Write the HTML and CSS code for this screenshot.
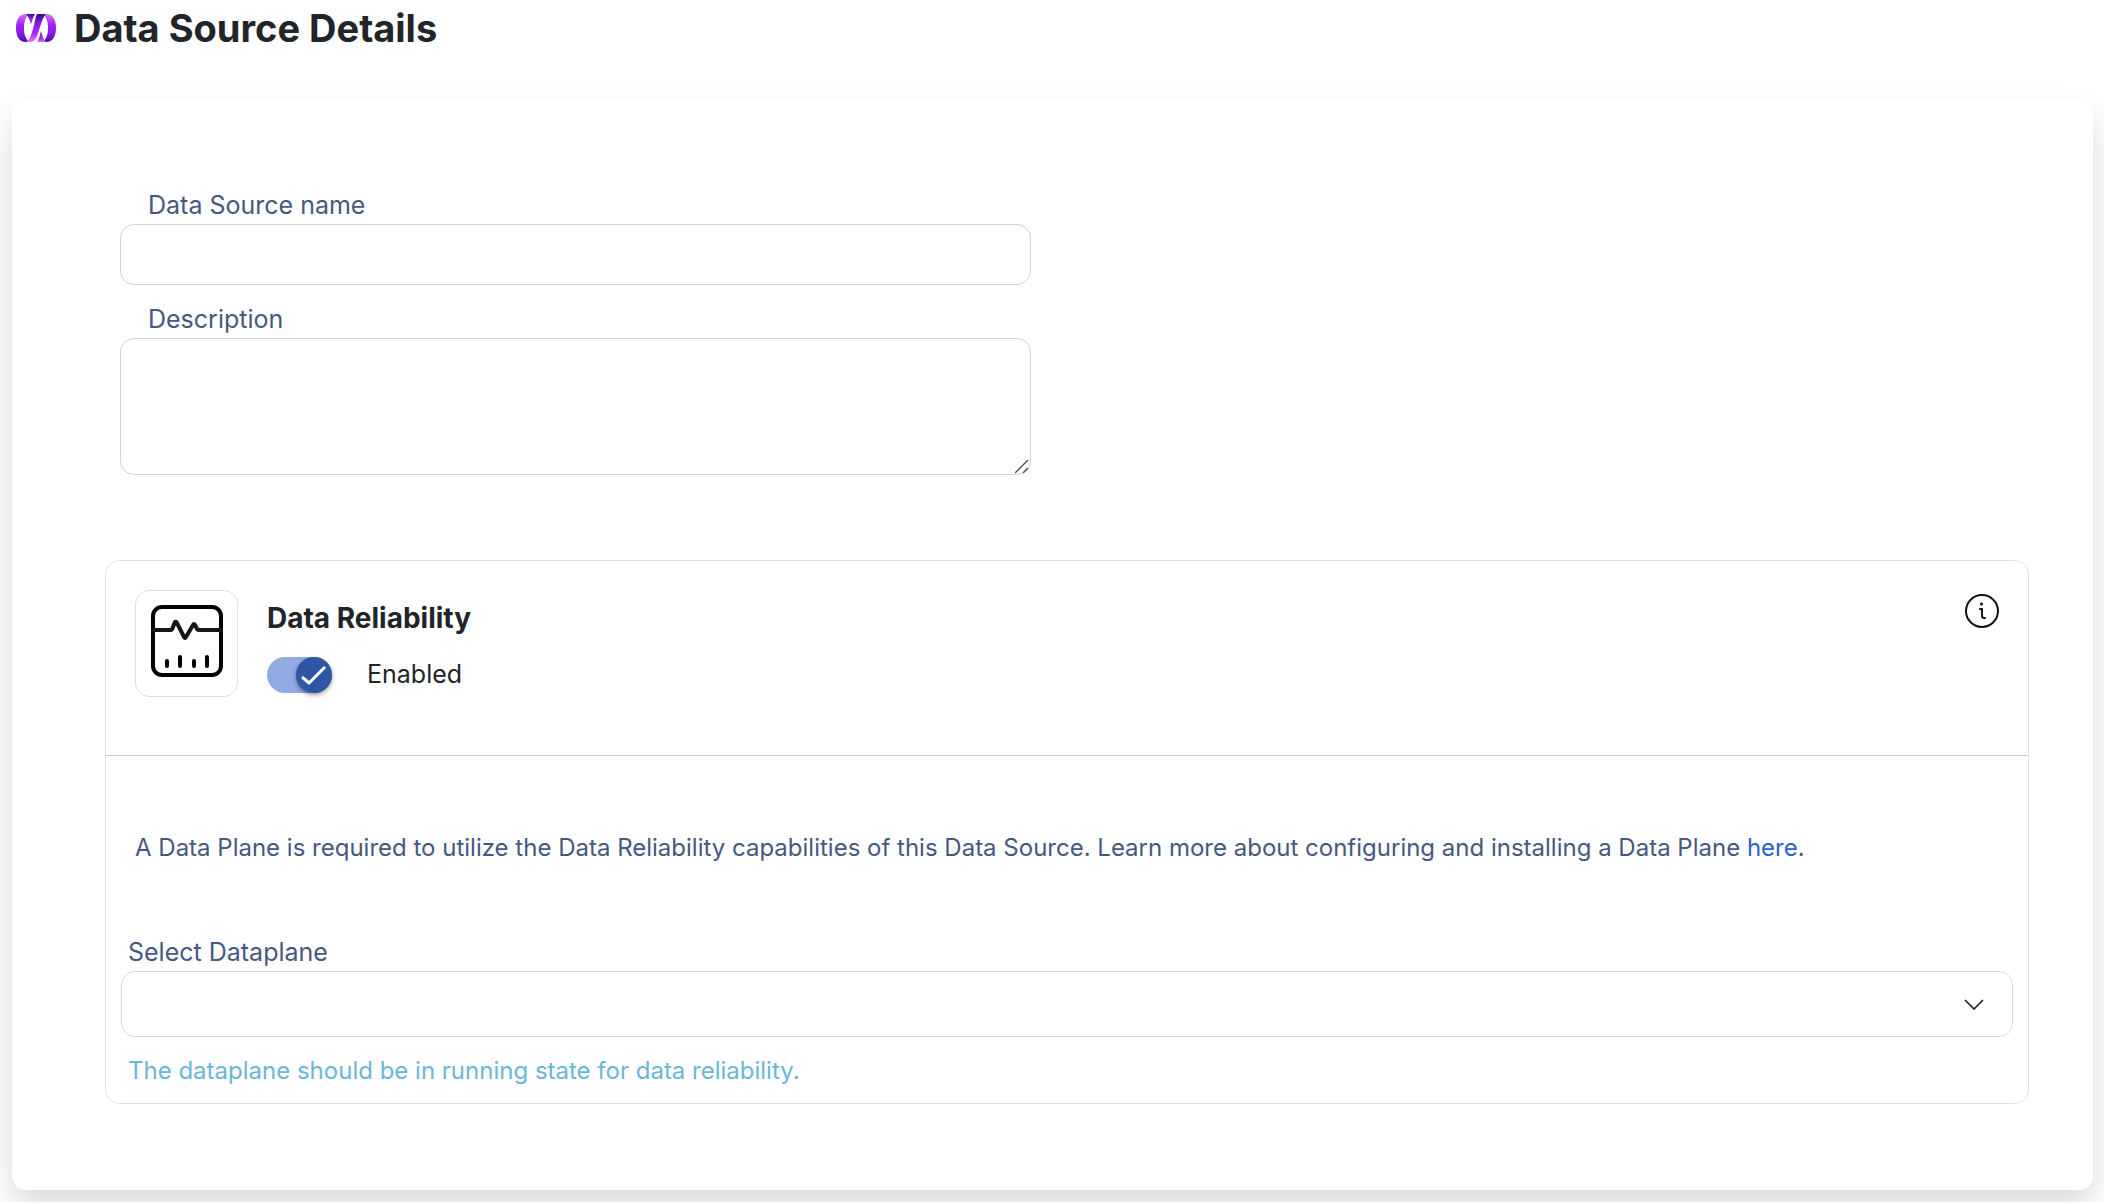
FILE: index.html
```html
<!DOCTYPE html>
<html lang="en">
<head>
    <meta charset="UTF-8">
    <meta name="viewport" content="width=device-width, initial-scale=1.0">
    <title>Data Source Details</title>
    <link rel="stylesheet" href="styles.css">
</head>
<body>

    <header class="page-header">
        <svg class="logo" viewBox="0 0 40 28" aria-hidden="true">
            <defs>
                <linearGradient id="ring" x1="0" y1="0" x2="0" y2="1">
                    <stop offset="0" stop-color="#dc70f5"/>
                    <stop offset="0.4" stop-color="#a020f8"/>
                    <stop offset="0.7" stop-color="#8a1ae8"/>
                    <stop offset="1" stop-color="#3f1094"/>
                </linearGradient>
                <linearGradient id="band" x1="0" y1="0" x2="0" y2="1">
                    <stop offset="0" stop-color="#35108c"/>
                    <stop offset="0.45" stop-color="#9a1ff5"/>
                    <stop offset="0.7" stop-color="#a828f8"/>
                    <stop offset="1" stop-color="#e47af5"/>
                </linearGradient>
            </defs>
            <path fill="url(#ring)" d="M10 0C3 0 0 6 0 14s3 14 10 14h3C10 25 8 21 8 14S10 3 13 0z"/>
            <path fill="url(#ring)" d="M27 0h3c7 0 10 6 10 14s-3 14-10 14h-3c3-3 5-7 5-14S30 3 27 0z"/>
            <path fill="url(#band)" d="M10 0h9c-2 3-3 7-4 11C14 7 13 3 10 0z"/>
            <path fill="url(#band)" d="M21 0h9c-3 3-4 7-6 13-3 9-4 15-10 15h-4c4-2 5-7 7-13 2-7 2-12 4-15z"/>
            <path fill="url(#band)" d="M25 17c1 4 2 8 5 11h-9c2-3 3-7 4-11z"/>
        </svg>
        <h1>Data Source Details</h1>
    </header>

    <main class="card">
        <form>
            <div class="source-fields">
                <div class="input-group">
                    <label for="source-name">Data Source name</label>
                    <input type="text" id="source-name">
                </div>
                <div class="input-group">
                    <label for="description">Description</label>
                    <textarea id="description"></textarea>
                </div>
            </div>

            <section class="panel">
                <div class="panel-header">
                    <div class="panel-icon">
                        <svg viewBox="0 0 72 72" fill="none" stroke="#000" stroke-width="4" stroke-linecap="round" stroke-linejoin="round" aria-hidden="true">
                            <rect x="2" y="2" width="68" height="68" rx="9"/>
                            <path stroke="#161616" d="M2 25h18q1 0 2-3l2-5q1-1 2 1l7 14q1 2 2 0l7-12q1-2 2 0l2 4q1 1 2 1h22"/>
                            <path d="M16 56v5M29 52v9M43 56v5M56 52v9"/>
                        </svg>
                    </div>
                    <div class="panel-title">
                        <h2>Data Reliability</h2>
                        <div class="toggle-row">
                            <input type="checkbox" class="toggle" id="reliability-enabled" checked>
                            <label for="reliability-enabled">Enabled</label>
                        </div>
                    </div>
                    <button type="button" class="info-button" aria-label="Information">
                        <svg viewBox="0 0 34 34" fill="none" stroke="#111" stroke-width="2" stroke-linecap="round" stroke-linejoin="round" aria-hidden="true">
                            <circle cx="17" cy="17" r="16"/>
                            <path d="M15 15h2v7q0 2 2 2h1"/>
                            <circle cx="16.500" cy="10" r="1.500" fill="#111" stroke="none"/>
                        </svg>
                    </button>
                </div>

                <div class="panel-body">
                    <p class="notice">A Data Plane is required to utilize the Data Reliability capabilities of this Data Source. Learn more about configuring and installing a Data Plane <a href="#">here</a>.</p>
                    <div class="select-group">
                        <label for="dataplane">Select Dataplane</label>
                        <div class="select-box">
                            <select id="dataplane">
                                <option value=""></option>
                            </select>
                            <svg class="chevron" viewBox="0 0 20 12" fill="none" stroke="#111" stroke-width="1.500" aria-hidden="true">
                                <path d="M1 2l9 9 9-9"/>
                            </svg>
                        </div>
                        <p class="hint">The dataplane should be in running state for data reliability.</p>
                    </div>
                </div>
            </section>
        </form>
    </main>

</body>
</html>
```
FILE: styles.css
```css
* {
    box-sizing: border-box;
}
body {
    margin: 0;
    padding: 0 11px 12px 12px;
    font-family: Inter, sans-serif;
    font-size: 25px;
    line-height: 34px;
    color: #212529;
    background: #fff;
}
h1, h2, p {
    margin: 0;
}
.page-header {
    display: flex;
    align-items: center;
    gap: 18px;
    height: 56px;
    padding-left: 4px;
    margin-bottom: 44px;
}
.logo {
    width: 40px;
    height: 28px;
}
h1 {
    font-size: 38px;
    line-height: 56px;
    font-weight: 700;
}
.card {
    padding: 86px 64px 86px 93px;
    border-radius: 14px;
    background: #fff;
    box-shadow: 0 16px 32px rgba(0, 0, 0, 0.15);
}
.source-fields {
    width: 50%;
    padding: 0 36px 0 15px;
    margin-bottom: 85px;
}
.input-group {
    margin-bottom: 15px;
}
label {
    display: block;
    color: #47587f;
}
.input-group label {
    padding: 2px 28px;
}
.source-fields input, textarea {
    display: block;
    width: 100%;
    height: 61px;
    padding: 12px 20px;
    border: 1px solid #ced4da;
    border-radius: 14px;
    background: #fff;
    font: inherit;
    color: #212529;
}
.source-fields textarea {
    height: 137px;
}
textarea::-webkit-resizer {
    background: url("data:image/svg+xml,%3Csvg xmlns='http://www.w3.org/2000/svg' viewBox='0 0 15 15'%3E%3Cpath d='M0 14L13 1M8 14l5-5' fill='none' stroke='%23555' stroke-width='1.500'/%3E%3C/svg%3E") center/cover;
}
.panel {
    border: 1px solid #dee2e6;
    border-radius: 14px;
}
.panel-header {
    display: flex;
    align-items: flex-start;
    height: 195px;
    padding: 29px;
    border-bottom: 1px solid #c4c6c8;
}
.panel-icon {
    display: flex;
    align-items: center;
    justify-content: center;
    width: 103px;
    height: 107px;
    padding-bottom: 5px;
    border: 1px solid #dee2e6;
    border-radius: 14px;
}
.panel-icon svg {
    width: 72px;
    height: 72px;
}
.panel-title {
    flex: 1;
    padding: 10px 0 0 29px;
}
h2 {
    font-size: 28px;
    line-height: 36px;
    font-weight: 700;
}
.toggle-row {
    display: flex;
    align-items: flex-start;
    gap: 35px;
    margin-top: 21px;
}
.toggle-row label {
    color: #212529;
}
.toggle {
    appearance: none;
    width: 65px;
    height: 36px;
    margin: 0;
    border-radius: 18px;
    background: #dee2e6;
    cursor: pointer;
}
.toggle::before {
    content: "";
    display: block;
    width: 36px;
    height: 36px;
    border-radius: 50%;
    background: #3055a4;
    box-shadow: 0 2px 4px rgba(0, 0, 0, 0.4);
}
.toggle:checked {
    background: #91aae1;
}
.toggle:checked::before {
    margin-left: auto;
    background: #3055a4 url("data:image/svg+xml,%3Csvg xmlns='http://www.w3.org/2000/svg' viewBox='0 0 36 36'%3E%3Cpath d='M6 20l7 6 16-16' fill='none' stroke='white' stroke-width='3'/%3E%3C/svg%3E") center/cover;
}
.info-button {
    width: 34px;
    height: 34px;
    margin-top: 4px;
    padding: 0;
    border: none;
    background: none;
    cursor: pointer;
}
.info-button svg {
    display: block;
}
.panel-body {
    padding: 75px 15px 15px;
}
.notice {
    padding: 0 14px;
    margin-bottom: 70px;
    font-size: 24px;
    color: #47587f;
}
a {
    color: #2d5fcd;
    text-decoration: none;
}
.select-group label, .hint {
    padding: 0 7px;
}
.select-box {
    display: grid;
    align-items: center;
    margin: 2px 0 17px;
}
select {
    grid-area: 1 / 1;
    appearance: none;
    width: 100%;
    height: 66px;
    padding: 0 60px 0 20px;
    border: 1px solid #d8d8e6;
    border-radius: 14px;
    background: #fff;
    font: inherit;
}
.chevron {
    grid-area: 1 / 1;
    justify-self: end;
    width: 20px;
    height: 12px;
    margin-right: 29px;
    pointer-events: none;
}
.hint {
    font-size: 24px;
    color: #6ab6d6;
}
```
